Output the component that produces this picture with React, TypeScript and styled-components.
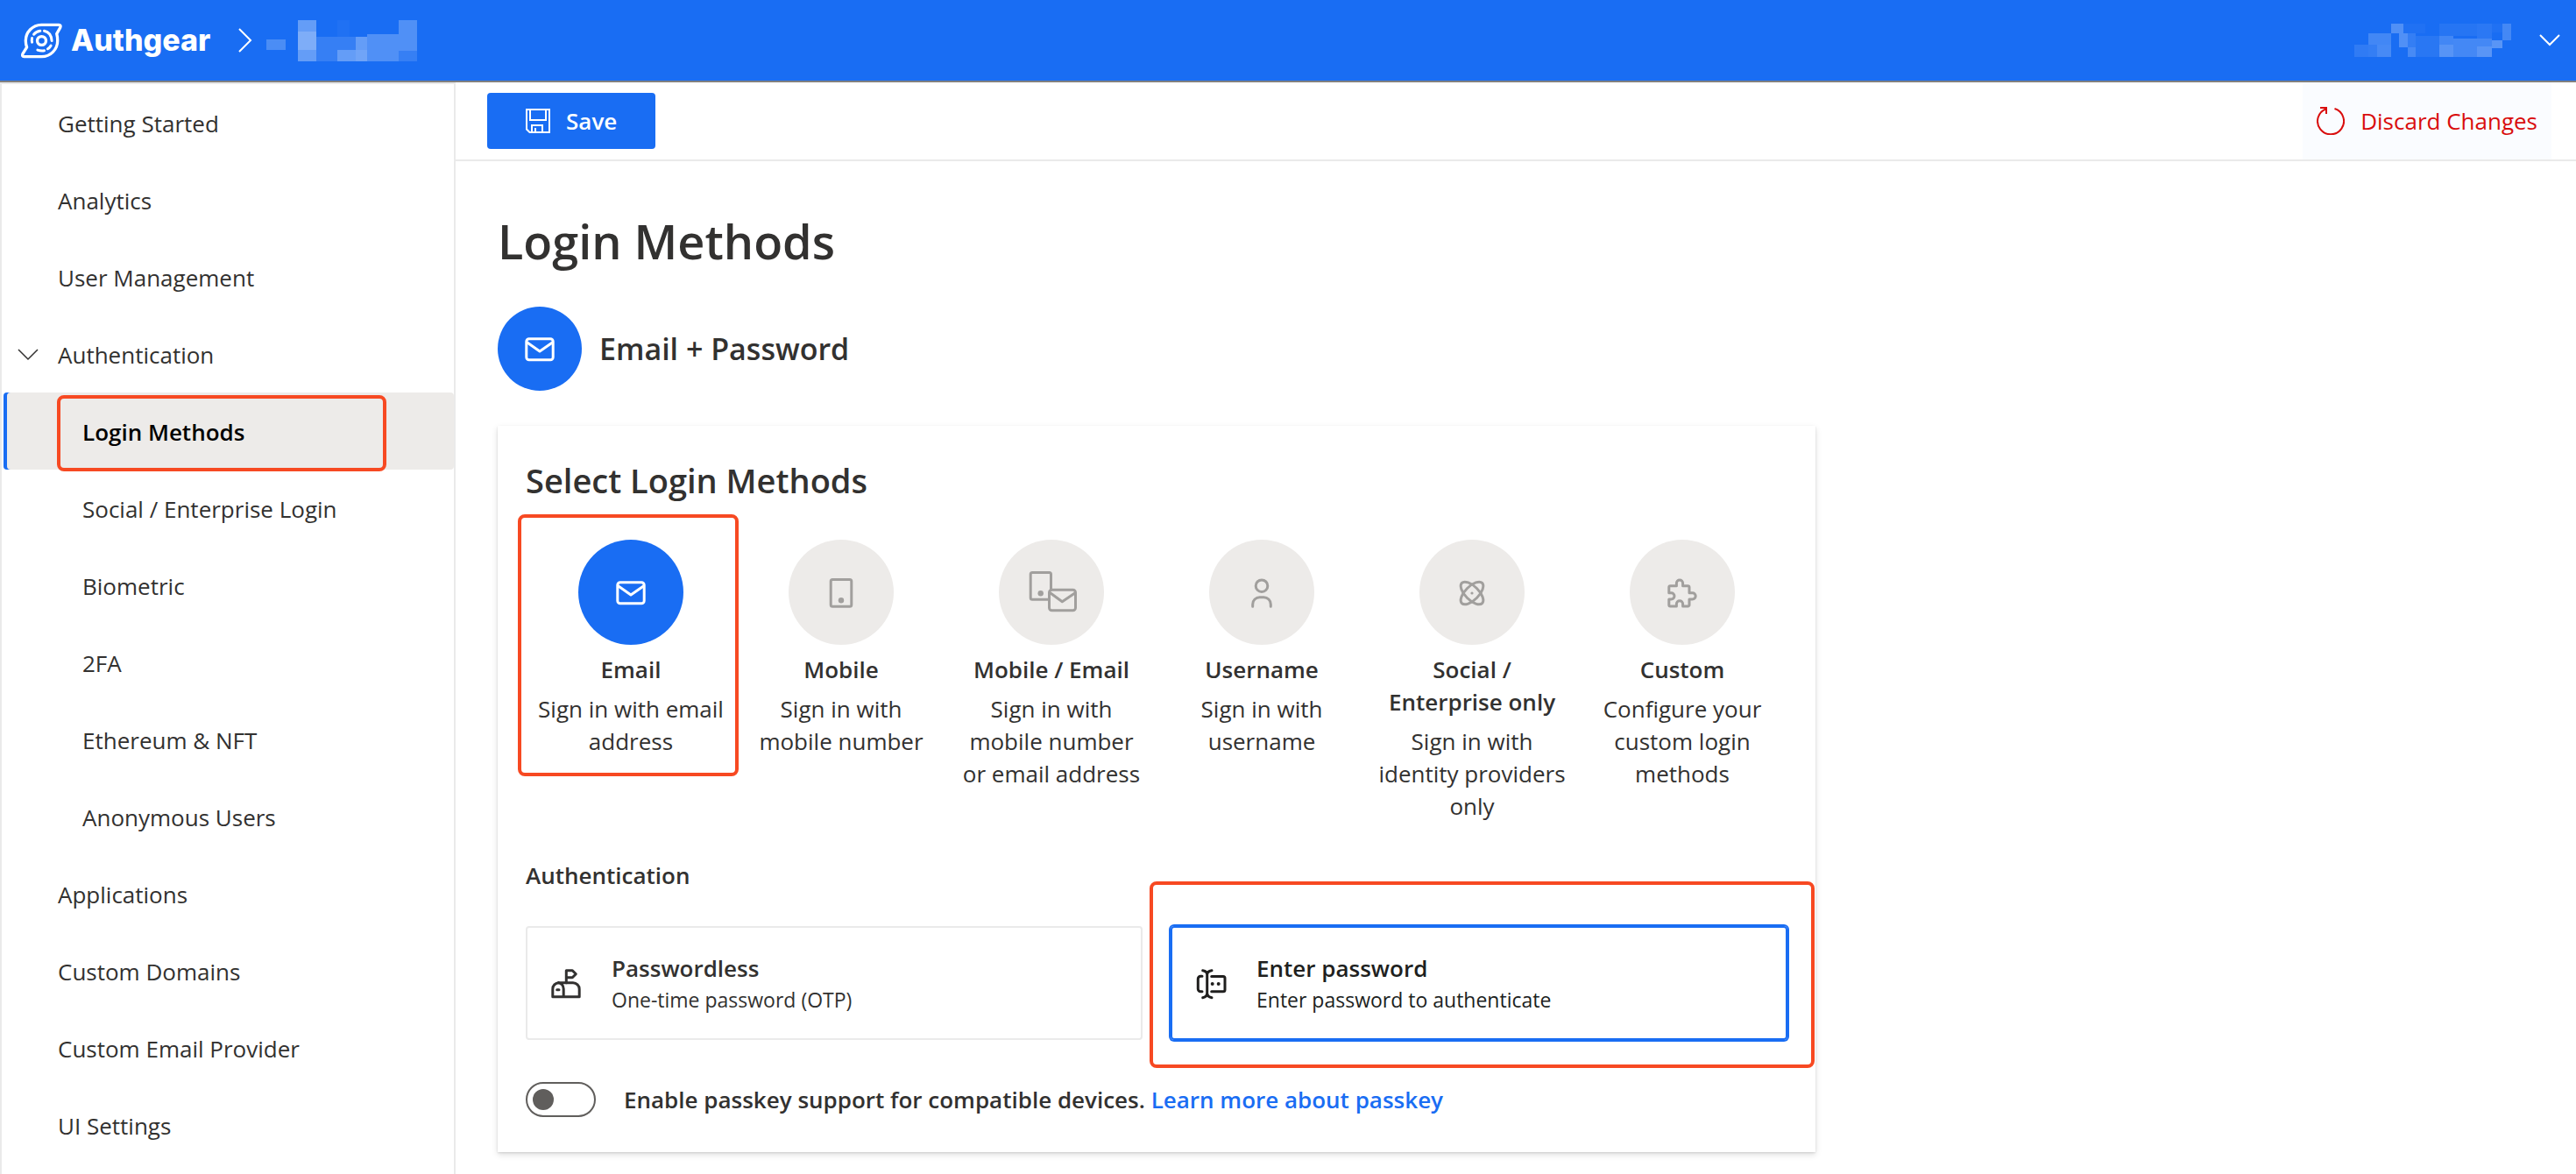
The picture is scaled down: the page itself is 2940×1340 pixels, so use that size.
import React, { useState } from "react";
import styled, { createGlobalStyle, css } from "styled-components";

const color = {
  primary: "#196df3",
  text: "#323130",
  strong: "#201f1e",
  danger: "#d90d0d",
  line: "#eaeaea",
  neutral: "#edebe9",
  muted: "#a19f9d",
  knob: "#605e5c",
  mark: "#f74922",
};

const GlobalStyle = createGlobalStyle`
  *, *::before, *::after { box-sizing: border-box; }
  body {
    margin: 0;
    background: #fff;
    color: ${color.text};
    font-family: "Open Sans", "Noto Sans", sans-serif;
    font-size: 26px;
    line-height: 37px;
  }
  button { font: inherit; color: inherit; border: 0; padding: 0; background: none; cursor: pointer; }
  h1, h2, h3, p { margin: 0; font-weight: 600; }
  a { color: inherit; text-decoration: none; }
  svg { display: block; flex: none; }
`;

/* Red frame that calls out an element in the guide. */
const callout = css<{ $inset?: string }>`
  position: relative;
  &::after {
    content: "";
    position: absolute;
    inset: ${(p) => p.$inset};
    border: 4px solid ${color.mark};
    border-radius: 8px;
    pointer-events: none;
  }
`;

const Page = styled.div`
  min-height: 100vh;
  display: flex;
  flex-direction: column;
`;

const Header = styled.header`
  height: 94px;
  display: flex;
  align-items: center;
  padding: 0 18px 0 24px;
  background: ${color.primary};
  border-bottom: 2px solid #808080;
  color: #fff;
`;

const Brand = styled.a`
  display: flex;
  align-items: center;
  gap: 10px;
  font-family: Inter, sans-serif;
  font-size: 34px;
  font-weight: 800;
  line-height: 40px;
`;

const Crumb = styled.div`
  display: flex;
  align-items: center;
  gap: 16px;
  margin-left: 32px;
`;

const Account = styled.button`
  display: flex;
  align-items: center;
  gap: 32px;
  margin-left: auto;
`;

const Body = styled.div`
  flex: 1;
  display: flex;
`;

const Sidebar = styled.nav`
  flex: none;
  width: 520px;
  border: 2px solid ${color.line};
  border-bottom: 0;
`;

const NavLink = styled.a<{ $nested?: boolean; $active?: boolean; $inset?: string }>`
  display: flex;
  align-items: center;
  height: 88px;
  margin-left: 2px;
  padding: 2px 0 0 ${(p) => (p.$nested ? 90 : 62)}px;
  border-radius: 4px;
  ${(p) =>
    p.$active &&
    css`
      background: ${color.neutral};
      color: #000;
      font-weight: 600;
      box-shadow: inset 4px 0 ${color.primary};
    `}
  ${(p) => p.$inset && callout}
`;

const NavGroup = styled(NavLink)`
  padding-left: 16px;
  gap: 22px;
`;

const Main = styled.main`
  flex: 1;
  min-width: 0;
`;

const Toolbar = styled.div`
  display: flex;
  justify-content: space-between;
  align-items: center;
  height: 90px;
  padding: 0 28px 0 36px;
  border-bottom: 2px solid ${color.line};
`;

const SaveButton = styled.button`
  display: flex;
  align-items: center;
  gap: 18px;
  height: 64px;
  padding: 0 44px;
  border-radius: 4px;
  background: ${color.primary};
  color: #fff;
  font-weight: 600;
`;

const DiscardButton = styled.button`
  display: flex;
  align-items: center;
  gap: 18px;
  height: 88px;
  padding: 0 16px;
  background: #fafcff;
  color: ${color.danger};
`;

const Content = styled.div`
  display: flex;
  flex-direction: column;
  gap: 40px;
  max-width: 1600px;
  padding: 56px 48px 24px;
`;

const Title = styled.h1`
  font-size: 54px;
  line-height: 70px;
`;

const Summary = styled.div`
  display: flex;
  align-items: center;
  gap: 20px;
  font-size: 34px;
  line-height: 48px;
  font-weight: 600;
`;

const Disc = styled.span<{ $size: number; $on?: boolean }>`
  display: flex;
  align-items: center;
  justify-content: center;
  flex: none;
  width: ${(p) => p.$size}px;
  height: ${(p) => p.$size}px;
  border-radius: 50%;
  background: ${(p) => (p.$on ? color.primary : color.neutral)};
  color: ${(p) => (p.$on ? "#fff" : color.muted)};
`;

const Card = styled.section`
  padding: 36px 32px 40px;
  background: #fff;
  box-shadow: 0 3px 7px rgba(0, 0, 0, 0.13), 0 1px 2px rgba(0, 0, 0, 0.11);
`;

const CardTitle = styled.h2`
  font-size: 38px;
  line-height: 52px;
`;

const Methods = styled.div`
  display: grid;
  grid-template-columns: repeat(6, 1fr);
  align-items: start;
  margin: 42px 0;
`;

const Method = styled.button<{ $inset?: string }>`
  display: flex;
  flex-direction: column;
  align-items: center;
  padding: 0 12px;
  text-align: center;
  ${(p) => p.$inset && callout}
`;

const MethodName = styled.span`
  margin: 10px 0 8px;
  font-weight: 600;
`;

const SectionTitle = styled.h3`
  font-size: 26px;
  line-height: 36px;
`;

const Options = styled.div`
  display: grid;
  grid-template-columns: 1fr 1fr;
  gap: 32px;
  margin: 40px 0 48px;
`;

const Option = styled.button<{ $on?: boolean; $inset?: string }>`
  display: flex;
  align-items: center;
  gap: 32px;
  height: 130px;
  padding: 0 24px;
  border: 2px solid ${(p) => (p.$on ? color.primary : color.line)};
  border-radius: 4px;
  box-shadow: ${(p) => (p.$on ? `0 0 0 2px ${color.primary}` : "none")};
  color: ${(p) => (p.$on ? color.strong : color.text)};
  text-align: left;
  ${(p) => p.$inset && callout}
`;

const OptionText = styled.span`
  display: flex;
  flex-direction: column;
  padding-top: 2px;
  font-size: 23px;
  line-height: 36px;
`;

const OptionName = styled.span`
  font-size: 26px;
  font-weight: 600;
`;

const PasskeyRow = styled.div`
  display: flex;
  align-items: center;
  gap: 32px;
  font-weight: 600;
`;

const Toggle = styled.input`
  appearance: none;
  flex: none;
  width: 80px;
  height: 40px;
  margin: 0;
  padding: 6px;
  border: 2px solid ${color.knob};
  border-radius: 20px;
  cursor: pointer;
  &::before {
    content: "";
    display: block;
    width: 24px;
    height: 24px;
    border-radius: 50%;
    background: ${color.knob};
  }
  &:checked::before { margin-left: auto; }
`;

const Learn = styled.a`
  color: ${color.primary};
`;

const Stroke = ({ size = 40, w = 3, children }: { size?: number; w?: number; children: React.ReactNode }) => (
  <svg width={size} height={size} viewBox={`0 0 ${size} ${size}`} fill="none" stroke="currentColor"
    strokeWidth={w} strokeLinecap="round" strokeLinejoin="round" aria-hidden="true">
    {children}
  </svg>
);

const MailIcon = () => (
  <Stroke>
    <rect x="4.8" y="8.8" width="30.4" height="24" rx="3" />
    <path d="M5.8 13 20 23 34.4 13" />
  </Stroke>
);
const MobileIcon = () => (
  <Stroke>
    <rect x="8.2" y="5.5" width="23.6" height="30.7" rx="2" />
    <circle cx="20" cy="29.3" r="3.2" fill="currentColor" stroke="none" />
  </Stroke>
);
const MobileMailIcon = () => (
  <Stroke size={60}>
    <path d="M29.5 27V9.5a2 2 0 0 0-2-2H8.2a2 2 0 0 0-2 2v26.7a2 2 0 0 0 2 2H27.5" />
    <circle cx="17.7" cy="31.3" r="3.2" fill="currentColor" stroke="none" />
    <rect x="27.5" y="27.2" width="30" height="23.6" rx="3" />
    <path d="M29 31 42.3 40.7 56.7 31" />
  </Stroke>
);
const UserIcon = () => (
  <Stroke>
    <circle cx="20" cy="12.7" r="6.8" />
    <path d="M9.7 36.3V33.7a8 8 0 0 1 8-8h4.6a8 8 0 0 1 8 8v2.6" />
  </Stroke>
);
const AtomIcon = () => (
  <Stroke>
    <ellipse cx="20" cy="21" rx="16.4" ry="7.7" transform="rotate(45 20 21)" />
    <ellipse cx="20" cy="21" rx="16.4" ry="7.7" transform="rotate(-45 20 21)" />
    <circle cx="20" cy="21" r="1.6" fill="currentColor" stroke="none" />
  </Stroke>
);
const PuzzleIcon = () => (
  <Stroke>
    <path d="M13.4 12.7V9.6a3.6 3.6 0 0 1 7.2 0V12.7H26.5a1.5 1.5 0 0 1 1.5 1.5V20.7H31.6a3.6 3.6 0 0 1 0 7.2H28V34.5a1.5 1.5 0 0 1-1.5 1.5H20.6V33.3a3.6 3.6 0 0 0-7.2 0V36H6.3a1.5 1.5 0 0 1-1.5-1.5V27.9H7.4a3.6 3.6 0 0 0 0-7.2H4.8V14.2a1.5 1.5 0 0 1 1.5-1.5Z" />
  </Stroke>
);
const MailboxIcon = () => (
  <Stroke>
    <path d="M4.8 35.8V27a7 7 0 0 1 7-7.2H28a7.2 7.2 0 0 1 7.2 7.2v8.8ZM11 19.8a6.2 7 0 0 1 6.2 7v9" />
    <path d="M20.3 19.8V5.8H27.3L31.3 9.8 27.3 13.8H20.3M9.7 27.7H12" />
  </Stroke>
);
const InputIcon = () => (
  <Stroke>
    <path d="M10 12.3H8.3a3 3 0 0 0-3 3V26.7a3 3 0 0 0 3 3H10M20.7 12.5H34a2 2 0 0 1 2 2V27.7a2 2 0 0 1-2 2H20.7" />
    <path d="M10.7 5.7Q15.7 6.5 15.7 10.5V31.5Q15.7 35.8 10.7 36.7M21 5.7Q15.7 6.5 15.7 10.5M15.7 31.5Q15.7 35.8 21 36.7" />
    <circle cx="21.7" cy="21" r="2" fill="currentColor" stroke="none" />
    <circle cx="28.7" cy="21" r="2" fill="currentColor" stroke="none" />
  </Stroke>
);
const SaveIcon = () => (
  <svg width="28" height="28" viewBox="0 0 28 28" fill="none" stroke="currentColor" strokeWidth="2" aria-hidden="true">
    <path d="M1 1H27V27H4.5L1 23.5ZM5 1V13H23V1M7 27V19H19V27M11 27V22" />
  </svg>
);
const DiscardIcon = () => (
  <svg width="32" height="32" viewBox="0 0 32 32" fill="none" stroke="currentColor" strokeWidth="2" aria-hidden="true">
    <path d="M20.5 2A15 15 0 1 1 11 2.2M4 1H11V8" />
  </svg>
);
const ChevronDown = ({ w = 2 }: { w?: number }) => (
  <svg width="24" height="14" viewBox="0 0 24 14" fill="none" stroke="currentColor" strokeWidth={w} aria-hidden="true">
    <path d="M1 1 12 12 23 1" />
  </svg>
);
const ChevronRight = () => (
  <svg width="16" height="28" viewBox="0 0 16 28" fill="none" stroke="currentColor" strokeWidth="2" aria-hidden="true">
    <path d="M1 1 14 14 1 27" />
  </svg>
);
const Logo = () => (
  <svg width="47" height="41" viewBox="72 74 142 122" fill="none" stroke="currentColor" strokeWidth="10" strokeLinejoin="round" aria-hidden="true">
    <path d="M142 80H202Q211 81 207 90L195 111Q198 122 198 135A55 55 0 0 1 143 190H83Q74 189 78 180L92 157Q88 147 88 135A55 55 0 0 1 142 80Z" />
    <circle cx="143" cy="135" r="15" />
    <path d="M116 113Q124 103 138 101M152 101Q176 106 178 135M175 152Q170 160 164 163M152 169Q141 171 129 167M110 140Q108 134 110 126" strokeLinecap="round" strokeWidth="9" />
  </svg>
);

type Block = [number, number, number, number, number];
const Redacted = ({ w, h, blocks }: { w: number; h: number; blocks: Block[] }) => (
  <svg width={w} height={h} viewBox={`0 0 ${w} ${h}`} fill="#fff" shapeRendering="crispEdges" aria-hidden="true">
    {blocks.map(([x, y, bw, bh, o], i) => (
      <rect key={i} x={x} y={y} width={bw} height={bh} opacity={o} />
    ))}
  </svg>
);

const projectBlocks: Block[] = [
  [0, 22, 22, 12, 0.22],
  [36, 0, 21, 13, 0.33], [36, 13, 21, 21, 0.44], [36, 34, 21, 13, 0.33],
  [57, 19, 24, 28, 0.13], [81, 0, 14, 19, 0.03], [81, 19, 21, 15, 0.13], [81, 34, 21, 13, 0.33],
  [102, 19, 13, 15, 0.33], [102, 34, 13, 13, 0.38],
  [115, 16, 36, 31, 0.24], [151, 0, 21, 35, 0.24], [151, 35, 21, 12, 0.13],
];
const accountBlocks: Block[] = [
  [0, 24, 16, 14, 0.1], [16, 11, 26, 13, 0.18], [16, 24, 10, 14, 0.12], [26, 24, 16, 14, 0.2],
  [42, 0, 14, 11, 0.24], [51, 11, 10, 16, 0.24], [61, 11, 9, 16, 0.12], [61, 27, 9, 11, 0.2],
  [56, 0, 25, 11, 0.03], [70, 14, 27, 24, 0.07], [97, 0, 43, 14, 0.06],
  [97, 14, 16, 10, 0.18], [97, 24, 16, 14, 0.27], [113, 17, 27, 21, 0.19],
  [140, 0, 17, 17, 0.08], [140, 17, 17, 9, 0.19], [140, 26, 17, 12, 0.28],
  [157, 0, 12, 10, 0.03], [157, 19, 12, 9, 0.28], [169, 0, 10, 19, 0.19],
];

type NavEntry = { label: string; nested?: boolean; group?: boolean };
const nav: NavEntry[] = [
  { label: "Getting Started" },
  { label: "Analytics" },
  { label: "User Management" },
  { label: "Authentication", group: true },
  { label: "Login Methods", nested: true },
  { label: "Social / Enterprise Login", nested: true },
  { label: "Biometric", nested: true },
  { label: "2FA", nested: true },
  { label: "Ethereum & NFT", nested: true },
  { label: "Anonymous Users", nested: true },
  { label: "Applications" },
  { label: "Custom Domains" },
  { label: "Custom Email Provider" },
  { label: "UI Settings" },
];

const methods = [
  { name: "Email", text: "Sign in with email address", Icon: MailIcon },
  { name: "Mobile", text: "Sign in with mobile number", Icon: MobileIcon },
  { name: "Mobile / Email", text: "Sign in with mobile number or email address", Icon: MobileMailIcon },
  { name: "Username", text: "Sign in with username", Icon: UserIcon },
  { name: "Social / Enterprise only", text: "Sign in with identity providers only", Icon: AtomIcon },
  { name: "Custom", text: "Configure your custom login methods", Icon: PuzzleIcon },
];

const options = [
  { name: "Passwordless", text: "One-time password (OTP)", Icon: MailboxIcon },
  { name: "Enter password", text: "Enter password to authenticate", Icon: InputIcon },
];

export default function App() {
  const [method, setMethod] = useState("Email");
  const [option, setOption] = useState("Enter password");

  return (
    <Page>
      <GlobalStyle />
      <Header>
        <Brand href="#">
          <Logo />
          Authgear
        </Brand>
        <Crumb>
          <ChevronRight />
          <Redacted w={172} h={47} blocks={projectBlocks} />
        </Crumb>
        <Account aria-label="Account menu">
          <Redacted w={179} h={38} blocks={accountBlocks} />
          <ChevronDown />
        </Account>
      </Header>
      <Body>
        <Sidebar aria-label="Main">
          {nav.map(({ label, nested, group }) =>
            group ? (
              <NavGroup key={label} href="#">
                <ChevronDown w={1.5} />
                {label}
              </NavGroup>
            ) : (
              <NavLink
                key={label}
                href="#"
                $nested={nested}
                $active={label === "Login Methods"}
                $inset={label === "Login Methods" ? "3px 77px -2px 61px" : undefined}
              >
                {label}
              </NavLink>
            )
          )}
        </Sidebar>
        <Main>
          <Toolbar>
            <SaveButton>
              <SaveIcon />
              Save
            </SaveButton>
            <DiscardButton>
              <DiscardIcon />
              Discard Changes
            </DiscardButton>
          </Toolbar>
          <Content>
            <Title>Login Methods</Title>
            <Summary>
              <Disc $size={96} $on>
                <MailIcon />
              </Disc>
              Email + Password
            </Summary>
            <Card>
              <CardTitle>Select Login Methods</CardTitle>
              <Methods>
                {methods.map(({ name, text, Icon }) => (
                  <Method
                    key={name}
                    aria-pressed={method === name}
                    onClick={() => setMethod(name)}
                    $inset={name === "Email" ? "-29px -3px -21px -9px" : undefined}
                  >
                    <Disc $size={120} $on={method === name}>
                      <Icon />
                    </Disc>
                    <MethodName>{name}</MethodName>
                    <span>{text}</span>
                  </Method>
                ))}
              </Methods>
              <SectionTitle>Authentication</SectionTitle>
              <Options>
                {options.map(({ name, text, Icon }) => (
                  <Option
                    key={name}
                    aria-pressed={option === name}
                    onClick={() => setOption(name)}
                    $on={option === name}
                    $inset={name === "Enter password" ? "-53px -33px -34px -26px" : undefined}
                  >
                    <Icon />
                    <OptionText>
                      <OptionName>{name}</OptionName>
                      {text}
                    </OptionText>
                  </Option>
                ))}
              </Options>
              <PasskeyRow>
                <Toggle type="checkbox" role="switch" id="passkey" />
                <p>
                  <label htmlFor="passkey">Enable passkey support for compatible devices.</label>{" "}
                  <Learn href="#">Learn more about passkey</Learn>
                </p>
              </PasskeyRow>
            </Card>
          </Content>
        </Main>
      </Body>
    </Page>
  );
}
